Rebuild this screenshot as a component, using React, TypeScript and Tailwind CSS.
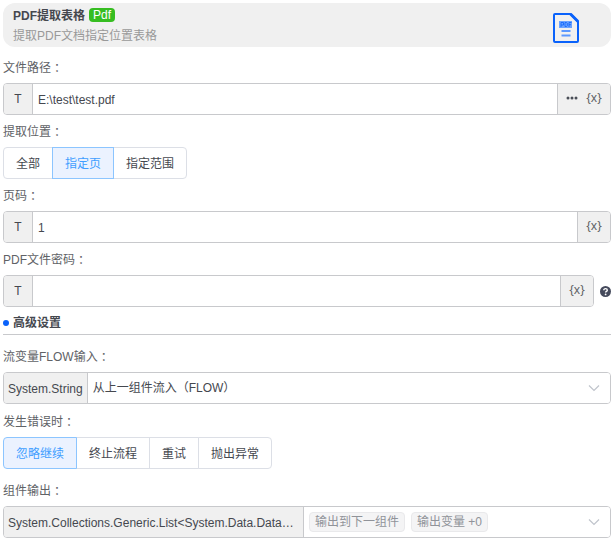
import { useState, type ReactNode } from "react";

function FieldLabel({ htmlFor, children }: { htmlFor?: string; children: ReactNode }) {
  return (
    <label htmlFor={htmlFor} className="flex h-8 items-center pt-0.5 text-[#606266]">
      {children}
      <span className="font-['Noto_Sans_CJK_TC',sans-serif]">：</span>
    </label>
  );
}

function TypeMark() {
  return (
    <button type="button" className="w-[29px] shrink-0 border-r border-[#c8c9cc] bg-[#f0f0f0]">
      T
    </button>
  );
}

function TextField({
  id,
  value = "",
  type = "text",
  browse = false,
}: {
  id: string;
  value?: string;
  type?: string;
  browse?: boolean;
}) {
  return (
    <div className="flex h-8 min-w-0 flex-1 overflow-hidden rounded border border-[#c8c9cc]">
      <TypeMark />
      <input
        id={id}
        type={type}
        defaultValue={value}
        className="min-w-0 flex-1 bg-white px-[5px] pt-0.5 outline-none"
      />
      <div className="flex shrink-0 items-center gap-2 border-l border-[#c8c9cc] bg-[#f0f0f0] px-2">
        {browse && (
          <button type="button" aria-label="浏览" className="flex h-full w-3 items-center justify-center pb-0.5">
            <svg width="12" height="4" viewBox="0 0 12 4" fill="#4a4e57">
              <circle cx="2" cy="2" r="1.5" />
              <circle cx="6" cy="2" r="1.5" />
              <circle cx="10" cy="2" r="1.5" />
            </svg>
          </button>
        )}
        <button type="button" aria-label="插入变量" className="flex h-full w-4 items-center justify-center pb-0.5">
          <span className="font-['Noto_Sans',sans-serif] text-[#606266]">{"{x}"}</span>
        </button>
      </div>
    </div>
  );
}

function RadioButtons({ name, options, initial }: { name: string; options: string[]; initial: string }) {
  const [picked, setPicked] = useState(initial);
  return (
    <div role="radiogroup" aria-label={name} className="flex h-8">
      {options.map((option) => (
        <label
          key={option}
          className="relative -ml-px flex cursor-pointer items-center border border-[#dcdfe6] bg-white px-3 pt-0.5 text-[#45484f] first:ml-0 first:rounded-l last:rounded-r has-checked:z-10 has-checked:border-[#8cc5ff] has-checked:bg-[#ebf2ff] has-checked:text-[#409eff]"
        >
          <input
            type="radio"
            name={name}
            value={option}
            checked={picked === option}
            onChange={() => setPicked(option)}
            className="sr-only"
          />
          {option}
        </label>
      ))}
    </div>
  );
}

function Chevron() {
  return (
    <svg width="12" height="8" viewBox="0 0 12 8" fill="none" stroke="#c0c4cc" strokeWidth="1.2" className="pointer-events-none shrink-0">
      <path d="M1 1.5 6 6.5 11 1.5" />
    </svg>
  );
}

function PdfIcon() {
  return (
    <svg width="26" height="30" viewBox="0 0 26 30" fill="none">
      <path d="M2 1H17.5L25 8.5V28A1 1 0 0 1 24 29H2A1 1 0 0 1 1 28V2A1 1 0 0 1 2 1Z" stroke="#0a62fb" strokeWidth="2" strokeLinejoin="round" />
      <path d="M17.5 1 25 8.5" stroke="#0a62fb" strokeWidth="2.8" />
      <rect x="6" y="8" width="13" height="7" fill="#6aa2ff" />
      <path
        d="M8 14V9.5H10.5V12H8M12 9.5H13.5L14.3 10.3V12.7L13.5 13.5H12ZM16 14V9.5H18.5M16 11.7H18"
        stroke="#0a62fb"
        strokeWidth="0.8"
      />
      <path d="M8.5 18H17.5M8.5 22.5H17.5" stroke="#5b98ff" strokeWidth="1.8" />
    </svg>
  );
}

function Tag({ children }: { children: ReactNode }) {
  return (
    <span className="flex h-5 items-center rounded border border-[#e9e9eb] bg-[#f4f4f5] px-[5px] text-[#909399]">
      {children}
    </span>
  );
}

export default function App() {
  return (
    <main className="bg-white p-[3px] font-['Liberation_Sans','Noto_Sans_CJK_SC',sans-serif] text-xs text-[#45484f]">
      <header className="mb-1 flex h-11 items-center justify-between rounded-xl bg-[#f0f0f0] pr-8 pl-[10px]">
        <div className="pt-0.5">
          <div className="flex h-5 items-center gap-1">
            <h1 className="font-bold">PDF提取表格</h1>
            <span className="mb-0.5 rounded bg-[#36bd21] px-1 leading-[14px] text-white">Pdf</span>
          </div>
          <p className="leading-5 text-[#999999]">提取PDF文档指定位置表格</p>
        </div>
        <div className="pt-1.5">
          <PdfIcon />
        </div>
      </header>

      <FieldLabel htmlFor="path">文件路径</FieldLabel>
      <div className="flex">
        <TextField id="path" value="E:\test\test.pdf" browse />
      </div>

      <FieldLabel>提取位置</FieldLabel>
      <RadioButtons name="提取位置" options={["全部", "指定页", "指定范围"]} initial="指定页" />

      <FieldLabel htmlFor="page">页码</FieldLabel>
      <div className="flex">
        <TextField id="page" value="1" />
      </div>

      <FieldLabel htmlFor="password">PDF文件密码</FieldLabel>
      <div className="flex items-center gap-[6px]">
        <TextField id="password" type="password" />
        <button type="button" aria-label="帮助" className="shrink-0">
          <svg width="11" height="11" viewBox="0 0 11 11">
            <circle cx="5.5" cy="5.5" r="5.5" fill="#454a5c" />
            <path d="M3.8 4.3C3.8 2 7.3 2.2 7.3 4.2 7.3 5.4 5.6 5.3 5.6 6.6" fill="none" stroke="#fff" strokeWidth="1.4" />
            <circle cx="5.6" cy="8.4" r="0.9" fill="#fff" />
          </svg>
        </button>
      </div>

      <h2 className="mb-[5px] flex h-7 items-center gap-1 border-b border-[#c8c9cc] pt-1 font-bold">
        <span className="size-[6px] rounded-full bg-[#0a62fb]" />
        高级设置
      </h2>

      <FieldLabel htmlFor="flow">流变量FLOW输入</FieldLabel>
      <div className="mb-px flex h-8 overflow-hidden rounded border border-[#c8c9cc]">
        <span className="flex shrink-0 items-center border-r border-[#c8c9cc] bg-[#f0f0f0] px-1 pt-px">System.String</span>
        <div className="grid min-w-0 flex-1 items-center">
          <select id="flow" className="col-start-1 row-start-1 h-full w-full appearance-none bg-white px-[5px] outline-none">
            <option>从上一组件流入（FLOW）</option>
          </select>
          <span className="pointer-events-none col-start-1 row-start-1 mr-[10px] justify-self-end">
            <Chevron />
          </span>
        </div>
      </div>

      <FieldLabel>发生错误时</FieldLabel>
      <div className="mb-[5px]">
        <RadioButtons name="发生错误时" options={["忽略继续", "终止流程", "重试", "抛出异常"]} initial="忽略继续" />
      </div>

      <FieldLabel htmlFor="output">组件输出</FieldLabel>
      <div className="flex h-8 overflow-hidden rounded border border-[#c8c9cc]">
        <div className="flex w-[300px] shrink-0 items-center border-r border-[#c8c9cc] bg-[#f0f0f0] pt-px pr-2 pl-1">
          <span>System.Collections.Generic.List&lt;System.Data.Data…</span>
        </div>
        <button
          id="output"
          type="button"
          aria-haspopup="listbox"
          className="flex min-w-0 flex-1 items-center gap-[6px] bg-white pr-[10px] pl-[5px]"
        >
          <Tag>输出到下一组件</Tag>
          <Tag>输出变量 +0</Tag>
          <span className="ml-auto">
            <Chevron />
          </span>
        </button>
      </div>
    </main>
  );
}
